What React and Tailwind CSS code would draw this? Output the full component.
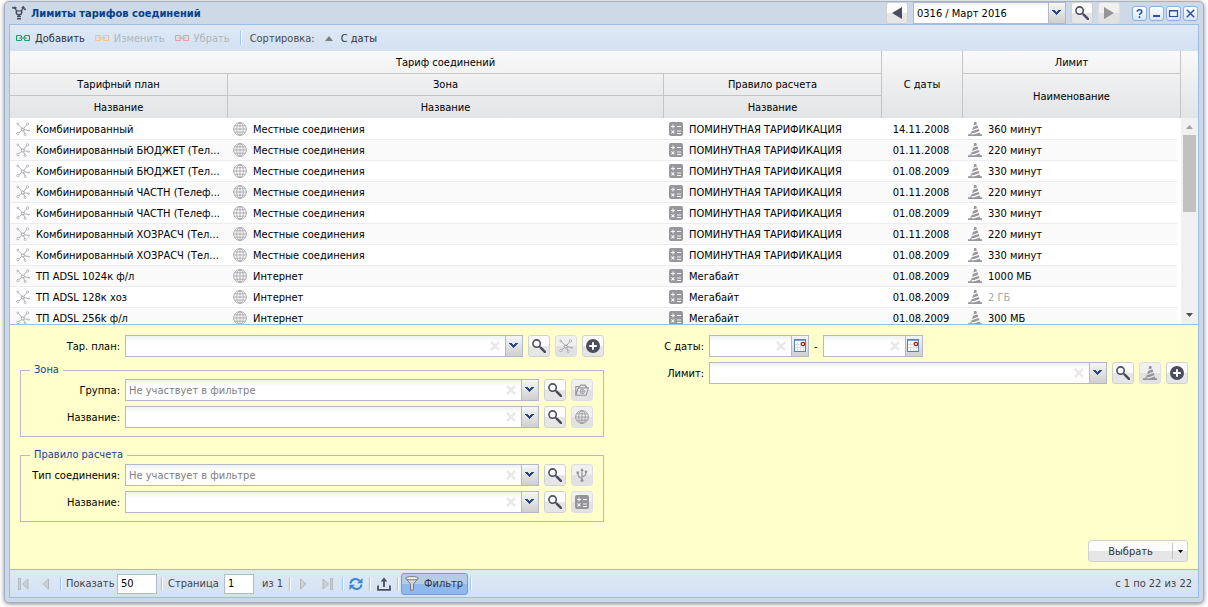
import React from "react";

const rows = [
  ["Комбинированный", "Местные соединения", "ПОМИНУТНАЯ ТАРИФИКАЦИЯ", "14.11.2008", "360 минут"],
  ["Комбинированный БЮДЖЕТ (Тел...", "Местные соединения", "ПОМИНУТНАЯ ТАРИФИКАЦИЯ", "01.11.2008", "220 минут"],
  ["Комбинированный БЮДЖЕТ (Тел...", "Местные соединения", "ПОМИНУТНАЯ ТАРИФИКАЦИЯ", "01.08.2009", "330 минут"],
  ["Комбинированный ЧАСТН (Телеф...", "Местные соединения", "ПОМИНУТНАЯ ТАРИФИКАЦИЯ", "01.11.2008", "220 минут"],
  ["Комбинированный ЧАСТН (Телеф...", "Местные соединения", "ПОМИНУТНАЯ ТАРИФИКАЦИЯ", "01.08.2009", "330 минут"],
  ["Комбинированный ХОЗРАСЧ (Тел...", "Местные соединения", "ПОМИНУТНАЯ ТАРИФИКАЦИЯ", "01.11.2008", "220 минут"],
  ["Комбинированный ХОЗРАСЧ (Тел...", "Местные соединения", "ПОМИНУТНАЯ ТАРИФИКАЦИЯ", "01.08.2009", "330 минут"],
  ["ТП ADSL 1024к ф/л", "Интернет", "Мегабайт", "01.08.2009", "1000 МБ"],
  ["ТП ADSL 128к хоз", "Интернет", "Мегабайт", "01.08.2009", "2 ГБ"],
  ["ТП ADSL 256k ф/л", "Интернет", "Мегабайт", "01.08.2009", "300 МБ"],
];

/* ---------- icons ---------- */

function Icon({ children, size = 14, className = "" }) {
  return (
    <svg width={size} height={size} viewBox="0 0 14 14" fill="none" stroke="currentColor" className={"shrink-0 " + className} aria-hidden="true">
      {children}
    </svg>
  );
}

const PlanIcon = (p) => (
  <Icon {...p}>
    <path d="M7 7.500 2 2M7 7.500 10.800 2.500M7 7.500 2.200 11.300M7 7.500l5.500 1M7 7.500l2 4.700" strokeWidth="0.8" />
    <circle cx="6.800" cy="7.500" r="1.500" fill="#fff" strokeWidth="1" />
    <g fill="#fff" strokeWidth="0.7">
      <circle cx="1.800" cy="1.900" r=".9" />
      <circle cx="11.500" cy="1.900" r="1.200" />
      <circle cx="1.900" cy="11.600" r="1.200" />
      <circle cx="12.800" cy="8.600" r="0.700" />
      <circle cx="9.200" cy="12.500" r="1" />
    </g>
  </Icon>
);

const GlobeIcon = (p) => (
  <Icon {...p}>
    <circle cx="7" cy="7" r="6.4" strokeWidth="0.9" />
    <path d="M7 .6v12.8M.6 7h12.8M1.6 3.8h10.8M1.6 10.2h10.8" strokeWidth="0.8" />
    <ellipse cx="7" cy="7" rx="3.3" ry="6.4" strokeWidth="0.8" />
  </Icon>
);

const CalcIcon = (p) => (
  <Icon {...p}>
    <rect x="0" y="0" width="14" height="14" rx="2" fill="currentColor" stroke="none" />
    <path d="M2 4.500h4M4 2.500v4M8 4.500h4M8 9h4M8 11.500h4M2.400 8.400l3 3M5.400 8.400l-3 3" stroke="#f4f4f4" strokeWidth="1.100" />
  </Icon>
);

const ConeIcon = (p) => (
  <Icon {...p}>
    <path fill="currentColor" stroke="none" d="M6.200 0h1.900l.9 2.300-3.500 1.300zM5 5 9.400 3.300l.9 2.400L4.100 7.900zM3.600 9.300l7.200-2.400.7 2.200-5.300 1.800H3.100z" />
    <path fill="currentColor" stroke="none" d="M2.700 10.700h1.200l-.5 1.700 3.300-.2 5-1.800.7 1.900H14V14H0v-1.700h2.200z" />
  </Icon>
);

const FolderIcon = (p) => (
  <Icon {...p}>
    <path d="M.8 12V3.5h4l1-1.4h4.6v1.4h1V5M.8 12.3h10.4L13.4 4.9H3.2z" strokeWidth="1.1" />
    <circle cx="7.4" cy="8.4" r="2.2" strokeWidth="0.8" />
    <path d="M7.4 6.2v4.4M5.2 8.4h4.4" strokeWidth="0.6" />
  </Icon>
);

const UsbIcon = (p) => (
  <Icon {...p}>
    <path d="M7 13V1.5M7 10.5C3.5 9.5 2.8 8 2.8 5M7 9c3-.8 4-2 4-4.8" strokeWidth="1.2" />
    <g fill="currentColor" stroke="none">
      <path d="M7 0l1.8 3H5.2z" />
      <rect x="1.5" y="3.5" width="2.6" height="2.4" />
      <circle cx="11" cy="3.8" r="1.4" />
      <circle cx="7" cy="12.4" r="1.5" />
    </g>
  </Icon>
);

const PlusIcon = (p) => (
  <Icon {...p}>
    <circle cx="7" cy="7" r="7" fill="currentColor" stroke="none" />
    <path d="M7 3.2v7.6M3.2 7h7.6" stroke="#fff" strokeWidth="2" />
  </Icon>
);

const SearchIcon = (p) => (
  <Icon {...p}>
    <circle cx="4.6" cy="4.6" r="3.7" strokeWidth="1.6" />
    <path d="M7.4 7.4l2 2" strokeWidth="1.6" />
    <path d="M9.2 9.2l3.7 3.7" strokeWidth="2.6" strokeLinecap="round" />
  </Icon>
);

const LinkIcon = (p) => (
  <Icon {...p}>
    <path d="M5.500 6.200V5.500a1 1 0 0 0-1-1h-3a1 1 0 0 0-1 1v3a1 1 0 0 0 1 1h3a1 1 0 0 0 1-1v-.7M8.500 6.200V5.500a1 1 0 0 1 1-1h3a1 1 0 0 1 1 1v3a1 1 0 0 1-1 1h-3a1 1 0 0 1-1-1v-.7" strokeWidth="1.200" />
    <path d="M3.500 7h7" strokeWidth="1.200" />
  </Icon>
);

const LogoIcon = () => (
  <svg width="14" height="14" viewBox="0 0 14 14" className="shrink-0 text-[#4b4d5b]" fill="none" stroke="currentColor" aria-hidden="true">
    <path d="M3.300 2.500 4.800 5M10.700 2.500 9.200 5" strokeWidth="1.200" />
    <path d="M4.300 4.500v1.700C4.300 8 5.500 8.800 7 8.800s2.700-.8 2.700-2.600V4.500" strokeWidth="1.500" />
    <path d="M4.500 5h5" strokeWidth="1.200" />
    <path d="M7 8.600v2" strokeWidth="1.800" />
    <g fill="currentColor" stroke="none">
      <path d="M2.200.4 4.700 1.200 3.900 3.800 1.600 2.800zM9.400 1.300 11.600-.1l1.500 2.200-2.500 1.700z" />
      <circle cx="1" cy="1.700" r="1" />
      <circle cx="13" cy="3.200" r="1" />
      <rect x="5" y="10" width="4" height="1.200" />
      <rect x="5" y="12" width="4" height="1.500" />
    </g>
  </svg>
);

const ChevronIcon = () => (
  <svg width="10" height="6" viewBox="0 0 10 6" className="text-[#26498b]" fill="currentColor" aria-hidden="true">
    <path d="M0 0h3v1h1v1h1V1h1V0h3v1H8v1H7v1H6v1H5v1H4V4H3V3H2V2H1V1H0z" />
  </svg>
);

const CalendarIcon = () => (
  <svg width="14" height="14" viewBox="0 0 14 14" aria-hidden="true">
    <rect x=".5" y=".5" width="11" height="12" fill="#fff" stroke="#5b81b5" />
    <rect x="1" y="1" width="10" height="1" fill="#7ea3d0" />
    <path d="M1 5.500h10M1 8.500h10M3.500 3v9M6.500 3v9M9.500 3v9" stroke="#dadde2" />
    <circle cx="9" cy="5" r="1.700" fill="#fff" stroke="#9c1c1c" strokeWidth="1.200" />
  </svg>
);

/* ---------- controls ---------- */

function SquareButton({ label, muted, children }) {
  return (
    <button
      type="button"
      aria-label={label}
      className={
        "flex h-[22px] w-[22px] shrink-0 items-center justify-center rounded-[3px] border bg-linear-to-b from-50% to-50% " +
        (muted ? "border-[#dedede] from-[#f0f0f0] to-[#e2e2e2] text-[#94949a]" : "border-[#d1d1d1] from-[#fcfcfc] to-[#e6e6e6] text-[#4b4d5f]")
      }
    >
      {children}
    </button>
  );
}

function TriggerInput({ id, label, value, placeholder, calendar, clear = true, className = "" }) {
  return (
    <div className={"flex h-[22px] border border-[#b5b8c8] bg-linear-to-b from-[#eff2f2] to-white to-30% " + className}>
      <input
        id={id}
        aria-label={label}
        defaultValue={value}
        placeholder={placeholder}
        className="w-0 min-w-0 flex-1 bg-transparent px-[3px] outline-none placeholder:text-[#808080]"
      />
      {clear && (
        <button type="button" aria-label="Очистить" className="flex w-[20px] items-center justify-center text-[#e9e9e9]">
          <svg width="10" height="10" viewBox="0 0 10 10" stroke="currentColor" strokeWidth="2.400" aria-hidden="true">
            <path d="M.9.9l8.200 8.200M9.100.9.900 9.100" />
          </svg>
        </button>
      )}
      <button
        type="button"
        aria-label={calendar ? "Выбрать дату" : "Открыть список"}
        className={
          "flex shrink-0 items-center justify-center border-l border-[#b5b8c8] bg-linear-to-b from-[#f6f6f6] to-[#cfcfcf] " +
          (calendar ? "w-[17px] pl-px" : "w-[17px]")
        }
      >
        {calendar ? <CalendarIcon /> : <ChevronIcon />}
      </button>
    </div>
  );
}

function FieldRow({ id, label, placeholder, name, labelClass, children }) {
  return (
    <div className="flex items-center gap-[5px]">
      <label htmlFor={id} className={"shrink-0 text-right whitespace-nowrap " + labelClass}>{label}</label>
      <TriggerInput id={id} label={name} placeholder={placeholder} className="flex-1" />
      <SquareButton label="Найти"><SearchIcon /></SquareButton>
      {children}
    </div>
  );
}

function Group({ title, className = "", children }) {
  return (
    <fieldset className={"min-w-0 border border-[#b5b8c8] pr-[10px] pb-2 " + className}>
      <legend className="ml-[9px] h-[14px] px-1 leading-[14px] text-[#15428b]">{title}</legend>
      <div className="flex flex-col gap-[5px] pt-[2px]">{children}</div>
    </fieldset>
  );
}

const Separator = ({ className = "" }) => <span className={"h-[14px] w-[2px] shrink-0 border-r border-l border-r-white border-l-[#98c8ff] " + className} />;

function WindowTool({ label, children }) {
  return (
    <button type="button" aria-label={label} className="flex h-[15px] w-[15px] items-center justify-center rounded-[3px] border border-[#8bb0e0] bg-linear-to-b from-white to-[#d6e6f8] text-[#2b50a0]">
      <svg width="11" height="11" viewBox="0 0 11 11" fill="none" stroke="currentColor" aria-hidden="true">{children}</svg>
    </button>
  );
}

function PageArrow({ label, bar, flip }) {
  return (
    <button type="button" aria-label={label} disabled className="flex w-[22px] justify-center text-[#b4b8bf]">
      <svg width="11" height="12" viewBox="0 0 11 12" fill="#cdd0d5" stroke="currentColor" className={flip ? "rotate-180" : ""} aria-hidden="true">
        {bar && <rect x=".5" y=".5" width="2" height="11" />}
        <path d={bar ? "M10 1v10L4.500 6z" : "M8.500 1v10L3 6z"} />
      </svg>
    </button>
  );
}

/* ---------- sections ---------- */

function TitleBar() {
  return (
    <header className="flex h-[22px] shrink-0 items-center pr-px pl-[3px]">
      <LogoIcon />
      <h1 className="ml-[5px] flex-1 font-bold whitespace-nowrap text-[#04408c]">Лимиты тарифов соединений</h1>
      <div className="flex items-center gap-[5px]">
        <SquareButton label="Предыдущий период">
          <svg width="10" height="12" viewBox="0 0 10 12" fill="currentColor" aria-hidden="true"><path d="M10 0v12L0 6z" /></svg>
        </SquareButton>
        <TriggerInput label="Период" value="0316 / Март 2016" clear={false} className="w-[153px]" />
        <SquareButton label="Найти"><SearchIcon /></SquareButton>
        <SquareButton label="Следующий период" muted>
          <svg width="10" height="12" viewBox="0 0 10 12" fill="currentColor" aria-hidden="true"><path d="M0 0v12l10-6z" /></svg>
        </SquareButton>
      </div>
      <div className="ml-3 flex gap-[2px]">
        <WindowTool label="Справка"><path d="M3.300 3.800C3.300 1 7.800 1 7.800 3.700 7.800 5.300 5.500 5.300 5.500 7M5.500 8.300V10" strokeWidth="1.600" /></WindowTool>
        <WindowTool label="Свернуть"><path d="M2 8h7" strokeWidth="2" /></WindowTool>
        <WindowTool label="Развернуть"><path d="M1.500 2.500h8v6h-8zM1.500 3h8" strokeWidth="1.200" /></WindowTool>
        <WindowTool label="Закрыть"><path d="M1.800 1.800l7.400 7.400M9.200 1.800 1.800 9.200" strokeWidth="1.500" /></WindowTool>
      </div>
    </header>
  );
}

function Toolbar() {
  return (
    <div className="flex h-[26px] shrink-0 items-center bg-linear-to-b from-[#dfe9f5] to-[#d3e1f1] pl-[6px] text-[#333]">
      <button type="button" className="flex items-center gap-[5px]"><LinkIcon className="text-[#15a066]" />Добавить</button>
      <button type="button" disabled className="ml-[10px] flex items-center gap-[5px] text-[#b0b6be]"><LinkIcon className="text-[#f5c08a]" />Изменить</button>
      <button type="button" disabled className="ml-[10px] flex items-center gap-[5px] text-[#b0b6be]"><LinkIcon className="text-[#e09dab]" />Убрать</button>
      <Separator className="ml-[10px]" />
      <span className="ml-2 text-[#4c4c4c]">Сортировка:</span>
      <button type="button" className="ml-[10px] flex items-center gap-2">
        <svg width="8" height="5" viewBox="0 0 8 5" fill="#7d7d7d" aria-hidden="true"><path d="M4 0 8 5H0z" /></svg>
        С даты
      </button>
    </div>
  );
}

function Grid() {
  const cell = "border-r border-b border-[#c5c5c5] font-normal";
  const last = "border-r border-[#c5c5c5] font-normal";
  return (
    <section className="flex min-h-0 flex-1 flex-col bg-white">
      <table className="w-full shrink-0 table-fixed border-separate border-spacing-0 bg-linear-to-b from-[#f9f9f9] to-[#e3e4e6]">
        <colgroup>
          <col className="w-[218px]" />
          <col className="w-[436px]" />
          <col className="w-[218px]" />
          <col className="w-[81px]" />
          <col className="w-[218px]" />
          <col className="w-[17px]" />
        </colgroup>
        <thead>
          <tr className="h-[23px]">
            <th colSpan={3} className={cell}>Тариф соединений</th>
            <th rowSpan={3} className={last}>С даты</th>
            <th className={cell}>Лимит</th>
            <td rowSpan={3} />
          </tr>
          <tr className="h-[22px]">
            <th className={cell}>Тарифный план</th>
            <th className={cell}>Зона</th>
            <th className={cell}>Правило расчета</th>
            <th rowSpan={2} className={last}>Наименование</th>
          </tr>
          <tr className="h-[22px]">
            <th className={last}>Название</th>
            <th className={last}>Название</th>
            <th className={last}>Название</th>
          </tr>
        </thead>
      </table>
      <div className="flex min-h-0 flex-1 overflow-hidden">
        <div className="mr-1 min-w-0 flex-1 overflow-hidden pt-px">
          <table className="w-full table-fixed border-separate border-spacing-0">
            <colgroup>
              <col className="w-[217px]" />
              <col className="w-[436px]" />
              <col className="w-[217px]" />
              <col className="w-[82px]" />
              <col className="w-[215px]" />
            </colgroup>
            <tbody>
              {rows.map(([plan, zone, rule, date, limit], i) => (
                <tr key={i} className="h-[21px] whitespace-nowrap even:bg-[#fafafa] [&>td]:border-b [&>td]:border-[#ededed] [&>td]:px-[6px]">
                  <td><div className="flex items-center gap-[6px]"><PlanIcon className="text-[#a0a0a6]" />{plan}</div></td>
                  <td><div className="flex items-center gap-[6px]"><GlobeIcon className="text-[#a0a0a6]" />{zone}</div></td>
                  <td><div className="flex items-center gap-[6px]"><CalcIcon className="text-[#97979d]" />{rule}</div></td>
                  <td className="text-center">{date}</td>
                  <td><div className="flex items-center gap-[6px]"><ConeIcon className="text-[#97979d]" /><span className={limit === "2 ГБ" ? "text-[#a8a8a8]" : ""}>{limit}</span></div></td>
                </tr>
              ))}
            </tbody>
          </table>
        </div>
        <div className="flex w-[17px] shrink-0 flex-col items-center justify-between bg-[#f1f1f1]">
          <div className="flex flex-col items-center">
            <svg width="17" height="17" viewBox="0 0 17 17" fill="#a3a3a3" aria-hidden="true"><path d="M8.500 7 12 11H5z" /></svg>
            <div className="h-[77px] w-[13px] bg-[#c1c1c1]" />
          </div>
          <svg width="17" height="17" viewBox="0 0 17 17" fill="#505050" aria-hidden="true"><path d="M5 6h7l-3.500 4z" /></svg>
        </div>
      </div>
    </section>
  );
}

function FilterPanel() {
  return (
    <form className="shrink-0 border-t border-[#99bce8] bg-[#ffffcc] px-[10px] pt-[10px] pb-[7px]">
      <div className="grid grid-cols-2">
        <div>
          <FieldRow id="plan" label="Тар. план:" labelClass="w-[100px]">
            <SquareButton label="Тарифный план" muted><PlanIcon /></SquareButton>
            <SquareButton label="Добавить"><PlusIcon /></SquareButton>
          </FieldRow>
          <Group title="Зона" className="mt-[6px]">
            <FieldRow id="zone-group" label="Группа:" placeholder="Не участвует в фильтре" labelClass="w-[99px]">
              <SquareButton label="Группа зон" muted><FolderIcon /></SquareButton>
            </FieldRow>
            <FieldRow id="zone-name" label="Название:" labelClass="w-[99px]">
              <SquareButton label="Зона" muted><GlobeIcon /></SquareButton>
            </FieldRow>
          </Group>
          <Group title="Правило расчета" className="mt-[11px]">
            <FieldRow id="rule-type" label="Тип соединения:" placeholder="Не участвует в фильтре" labelClass="w-[99px]">
              <SquareButton label="Тип соединения" muted><UsbIcon /></SquareButton>
            </FieldRow>
            <FieldRow id="rule-name" label="Название:" labelClass="w-[99px]">
              <SquareButton label="Правило расчета" muted><CalcIcon /></SquareButton>
            </FieldRow>
          </Group>
        </div>
        <div className="flex flex-col gap-[5px]">
          <div className="flex items-center gap-[5px]">
            <label htmlFor="date-from" className="w-[100px] text-right">С даты:</label>
            <TriggerInput id="date-from" calendar className="w-[100px]" />
            <span>-</span>
            <TriggerInput label="По дату" calendar className="w-[100px]" />
          </div>
          <FieldRow id="limit" label="Лимит:" labelClass="w-[100px]">
            <SquareButton label="Лимит" muted><ConeIcon /></SquareButton>
            <SquareButton label="Добавить"><PlusIcon /></SquareButton>
          </FieldRow>
        </div>
      </div>
      <div className="mt-[18px] flex justify-end">
        <div className="flex h-[22px] w-[100px] items-center rounded-[3px] border border-[#d1d1d1] bg-linear-to-b from-[#fcfcfc] from-50% to-[#e6e6e6] to-50% text-[#333]">
          <button type="button" className="flex-1">Выбрать</button>
          <button type="button" aria-label="Другие действия" className="flex h-[16px] w-[15px] items-center justify-center border-l border-[#c4c4c4]">
            <svg width="5" height="3" viewBox="0 0 5 3" fill="#000" aria-hidden="true"><path d="M0 0h5L2.500 3z" /></svg>
          </button>
        </div>
      </div>
    </form>
  );
}

function PagingBar() {
  const box = "h-[20px] border border-[#b5b8c8] bg-white px-[3px] text-black outline-none";
  return (
    <footer className="flex h-[28px] shrink-0 items-center border-t border-[#99bce8] bg-linear-to-b from-[#dfe9f5] to-[#d3e1f1] pr-[6px] pl-[2px] text-[#444]">
      <PageArrow label="Первая страница" bar />
      <PageArrow label="Предыдущая страница" />
      <Separator className="ml-1" />
      <label htmlFor="page-size" className="ml-1 w-[51px]">Показать</label>
      <input id="page-size" defaultValue="50" className={"w-[40px] " + box} />
      <Separator className="ml-1" />
      <label htmlFor="page" className="ml-[5px] w-[56px]">Страница</label>
      <input id="page" defaultValue="1" className={"w-[30px] " + box} />
      <span className="ml-2 w-[27px] whitespace-nowrap">из 1</span>
      <Separator />
      <div className="flex gap-[2px] px-[1px]">
        <PageArrow label="Следующая страница" flip />
        <PageArrow label="Последняя страница" bar flip />
      </div>
      <Separator className="ml-[3px]" />
      <button type="button" aria-label="Обновить" className="ml-[5px] flex">
        <svg width="14" height="14" viewBox="0 0 14 14" fill="none" stroke="#3585d8" strokeWidth="2" aria-hidden="true">
          <path d="M1.500 6.500C2 2 7 .800 10.500 3.800M12.500 7.500C12 12 7 13.200 3.500 10.200" />
          <path d="M13.500 1v5.300H8zM.5 13V7.700H6z" fill="#3585d8" stroke="none" />
        </svg>
      </button>
      <Separator className="ml-[6px]" />
      <button type="button" aria-label="Выгрузить" className="ml-[6px] flex text-[#4b4d5f]">
        <svg width="14" height="14" viewBox="0 0 14 14" fill="none" stroke="currentColor" strokeWidth="1.800" aria-hidden="true">
          <path d="M7 10V3M1 8.500v4.300h12V8.500" />
          <path d="M7 .5 10.300 4.500H3.700z" fill="currentColor" stroke="none" />
        </svg>
      </button>
      <Separator className="ml-[6px]" />
      <button type="button" aria-pressed="true" className="ml-[2px] flex h-[22px] w-[67px] items-center gap-[5px] rounded-[3px] border border-[#7a9ac4] bg-linear-to-b from-[#b6cbe4] from-50% to-[#8fb9ec] to-50% pl-[3px] text-[#333]">
        <svg width="14" height="16" viewBox="0 0 14 16" fill="#d5d7da" stroke="#77797e" aria-hidden="true">
          <path d="M1 2.500 5.500 8v6.500l3-.8V8L13 2.500" />
          <ellipse cx="7" cy="2.200" rx="6.200" ry="1.600" fill="#f2f2f2" />
        </svg>
        Фильтр
      </button>
      <Separator className="ml-[2px]" />
      <span className="ml-auto">с 1 по 22 из 22</span>
    </footer>
  );
}

export default function App() {
  return (
    <div className="flex h-screen min-h-[500px] flex-col bg-white px-1 pt-px pb-1 font-['DejaVu_Sans_Condensed','DejaVu_Sans',sans-serif] text-[11px] leading-[15px] text-black">
      <main className="flex min-h-0 flex-1 flex-col rounded-[5px] border border-[#a2b1cb] bg-[#ced9e7] px-1 pb-1 shadow-[0_1px_4px_#888]">
        <TitleBar />
        <div className="flex min-h-0 flex-1 flex-col border border-[#99bce8]">
          <Toolbar />
          <Grid />
          <FilterPanel />
          <PagingBar />
        </div>
      </main>
    </div>
  );
}
